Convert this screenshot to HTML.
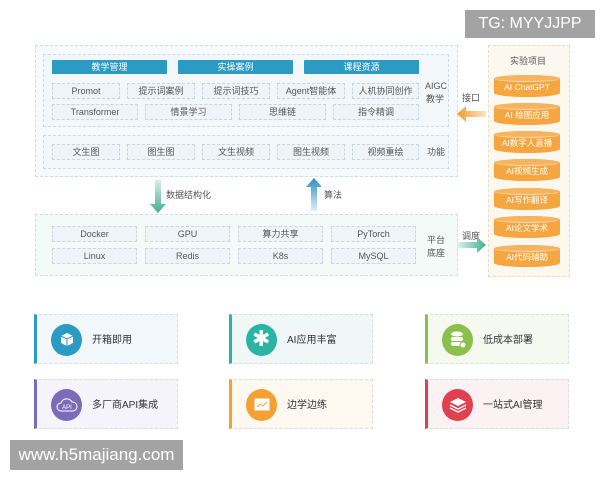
<!DOCTYPE html>
<html><head><meta charset="utf-8"><style>
*{margin:0;padding:0;box-sizing:border-box}
body{width:600px;height:480px;background:#fff;position:relative;overflow:hidden;font-family:"Liberation Sans","Noto Sans CJK SC",sans-serif;color:#555}
.a{position:absolute}
.box{position:absolute;border:1px dashed #cfdde6}
.hd{position:absolute;height:14px;background:#2b9bc3;color:#fff;font-size:9px;line-height:14px;text-align:center;border-radius:1px}
.it{position:absolute;height:16px;background:#eef4f8;border:1px dashed #c9d6de;font-size:9px;line-height:14px;text-align:center;color:#555}
.lb{position:absolute;font-size:9px;color:#555;line-height:13px}
.cy{position:absolute;left:494px;width:66px;height:22px;background:#f5a640;color:#fff;font-size:8.5px;line-height:24px;text-align:center;border-radius:33px/4px}
.cy:before{content:"";position:absolute;left:0;top:0;width:66px;height:6px;border-radius:50%;background:#f7b460;border-bottom:1px solid #fbd9a8}
.card{position:absolute;width:144px;height:50px;border:1px dashed #d8dde2;border-left:3px solid;font-size:10px;color:#333}
.card .c{position:absolute;left:14px;top:9px;width:31px;height:32px;border-radius:50%}
.card span{position:absolute;left:55px;top:16px}
</style></head><body>
<div class="a" style="left:465px;top:10px;width:130px;height:28px;background:#a3a3a3;color:#fff;font-size:16px;line-height:28px;text-align:center">TG: MYYJJPP</div>

<div class="box" style="left:35px;top:45px;width:423px;height:132px;background:#f6fafc"></div>
<div class="box" style="left:43px;top:54px;width:406px;height:73px;background:#f2f7fa"></div>
<div class="box" style="left:43px;top:135px;width:406px;height:34px;background:#f2f7fa"></div>
<div class="hd" style="left:52px;top:60px;width:115px">教学管理</div>
<div class="hd" style="left:178px;top:60px;width:115px">实操案例</div>
<div class="hd" style="left:304px;top:60px;width:115px">课程资源</div>
<div class="it" style="left:52px;top:83px;width:68px">Promot</div>
<div class="it" style="left:127px;top:83px;width:68px">提示词案例</div>
<div class="it" style="left:202px;top:83px;width:68px">提示词技巧</div>
<div class="it" style="left:277px;top:83px;width:68px">Agent智能体</div>
<div class="it" style="left:352px;top:83px;width:67px">人机协同创作</div>
<div class="it" style="left:52px;top:104px;width:86px">Transformer</div>
<div class="it" style="left:145px;top:104px;width:87px">情景学习</div>
<div class="it" style="left:239px;top:104px;width:87px">思维链</div>
<div class="it" style="left:333px;top:104px;width:86px">指令精调</div>
<div class="lb" style="left:425px;top:80px;text-align:center;width:20px">AIGC<br>教学</div>
<div class="it" style="left:52px;top:144px;width:68px">文生图</div>
<div class="it" style="left:127px;top:144px;width:68px">图生图</div>
<div class="it" style="left:202px;top:144px;width:68px">文生视频</div>
<div class="it" style="left:277px;top:144px;width:68px">图生视频</div>
<div class="it" style="left:352px;top:144px;width:67px">视频重绘</div>
<div class="lb" style="left:427px;top:146px">功能</div>

<svg class="a" style="left:148px;top:180px" width="20" height="34"><defs><linearGradient id="g1" x1="0" y1="0" x2="0" y2="1"><stop offset="0" stop-color="#d8efe8"/><stop offset="1" stop-color="#3fb08e"/></linearGradient><linearGradient id="g2" x1="0" y1="1" x2="0" y2="0"><stop offset="0" stop-color="#e0eef6"/><stop offset="1" stop-color="#2b8fc0"/></linearGradient></defs><path d="M7 0h6v24h5l-8 9-8-9h5z" fill="url(#g1)"/></svg>
<div class="lb" style="left:166px;top:189px">数据结构化</div>
<svg class="a" style="left:304px;top:177px" width="20" height="34"><path d="M7 34h6V10h5L10 1 2 10h5z" fill="url(#g2)"/></svg>
<div class="lb" style="left:324px;top:189px">算法</div>

<div class="box" style="left:35px;top:214px;width:423px;height:62px;background:#f3faf8"></div>
<div class="it" style="left:52px;top:226px;width:85px">Docker</div>
<div class="it" style="left:145px;top:226px;width:85px">GPU</div>
<div class="it" style="left:238px;top:226px;width:85px">算力共享</div>
<div class="it" style="left:331px;top:226px;width:85px">PyTorch</div>
<div class="it" style="left:52px;top:248px;width:85px">Linux</div>
<div class="it" style="left:145px;top:248px;width:85px">Redis</div>
<div class="it" style="left:238px;top:248px;width:85px">K8s</div>
<div class="it" style="left:331px;top:248px;width:85px">MySQL</div>
<div class="lb" style="left:427px;top:234px">平台<br>底座</div>
<div class="lb" style="left:462px;top:230px">调度</div>
<svg class="a" style="left:457px;top:236px" width="30" height="18"><defs><linearGradient id="g3"><stop offset="0" stop-color="#e2f3ee"/><stop offset="1" stop-color="#3fb08e"/></linearGradient><linearGradient id="g4" x1="1" x2="0"><stop offset="0" stop-color="#fde6c8"/><stop offset="1" stop-color="#f39a2c"/></linearGradient></defs><path d="M0 6h20V1l9 8-9 8v-5H0z" fill="url(#g3)"/></svg>
<div class="lb" style="left:462px;top:92px">接口</div>
<svg class="a" style="left:456px;top:105px" width="30" height="18"><path d="M30 6H10V1L1 9l9 8v-5h20z" fill="url(#g4)"/></svg>

<div class="box" style="left:488px;top:45px;width:82px;height:232px;background:#fdf8ef;border-color:#eedcc0"></div>
<div class="lb" style="left:510px;top:55px">实验项目</div>
<div class="cy" style="top:75px">AI ChatGPT</div>
<div class="cy" style="top:103px">AI 绘图应用</div>
<div class="cy" style="top:131px">AI数字人直播</div>
<div class="cy" style="top:159px">AI视频生成</div>
<div class="cy" style="top:188px">AI写作翻译</div>
<div class="cy" style="top:216px">AI论文学术</div>
<div class="cy" style="top:245px">AI代码辅助</div>

<div class="card" style="left:34px;top:314px;border-left-color:#2b9bc3;background:#f1f7fb"><div class="c" style="background:#2b9bc3"></div><svg class="a" style="left:22px;top:17px" width="16" height="16"><path d="M8 1l6 3v7l-6 3-6-3V4z" fill="#fff"/><path d="M2 4l6 3 6-3M8 7v7" stroke="#2b9bc3" fill="none"/></svg><span>开箱即用</span></div>
<div class="card" style="left:229px;top:314px;border-left-color:#2bb3a3;background:#f0f8f7"><div class="c" style="background:#2bb3a3"></div><div class="a" style="left:20px;top:11px;color:#fff;font-size:22px">✱</div><span>AI应用丰富</span></div>
<div class="card" style="left:425px;top:314px;border-left-color:#8cc04c;background:#f5f9f0"><div class="c" style="background:#8cc04c"></div><svg class="a" style="left:22px;top:16px" width="16" height="18"><ellipse cx="7" cy="3" rx="6" ry="2.5" fill="#fff"/><rect x="1" y="6" width="12" height="4" rx="2" fill="#fff"/><rect x="1" y="11" width="12" height="4" rx="2" fill="#fff"/><circle cx="13" cy="14" r="3" fill="#fff" stroke="#8cc04c"/></svg><span>低成本部署</span></div>
<div class="card" style="left:34px;top:379px;border-left-color:#7a6cb8;background:#f5f4fa"><div class="c" style="background:#7a6cb8"></div><svg class="a" style="left:19px;top:18px" width="22" height="14"><path d="M5 13a4 4 0 010-8 6 6 0 0111-1 4.5 4.5 0 011 9z" fill="none" stroke="#fff"/><text x="11" y="11" font-size="6" fill="#fff" text-anchor="middle" font-family="Liberation Sans">API</text></svg><span>多厂商API集成</span></div>
<div class="card" style="left:229px;top:379px;border-left-color:#f4a033;background:#fdf8f0"><div class="c" style="background:#f4a033"></div><svg class="a" style="left:22px;top:18px" width="16" height="14"><rect x="0.5" y="0.5" width="15" height="12" fill="#fff"/><path d="M3 9l3-3 3 2 4-4" stroke="#f4a033" fill="none"/></svg><span>边学边练</span></div>
<div class="card" style="left:425px;top:379px;border-left-color:#e0404f;background:#fcf2f3"><div class="c" style="background:#e0404f"></div><svg class="a" style="left:21px;top:16px" width="18" height="18"><path d="M9 2l8 4-8 4-8-4z" fill="#fff"/><path d="M1 9l8 4 8-4M1 12l8 4 8-4" stroke="#fff" fill="none" stroke-width="1.4"/></svg><span>一站式AI管理</span></div>

<div class="a" style="left:10px;top:440px;width:173px;height:30px;background:#a3a3a3;color:#fff;font-size:17px;line-height:30px;text-align:center">www.h5majiang.com</div>
</body></html>
